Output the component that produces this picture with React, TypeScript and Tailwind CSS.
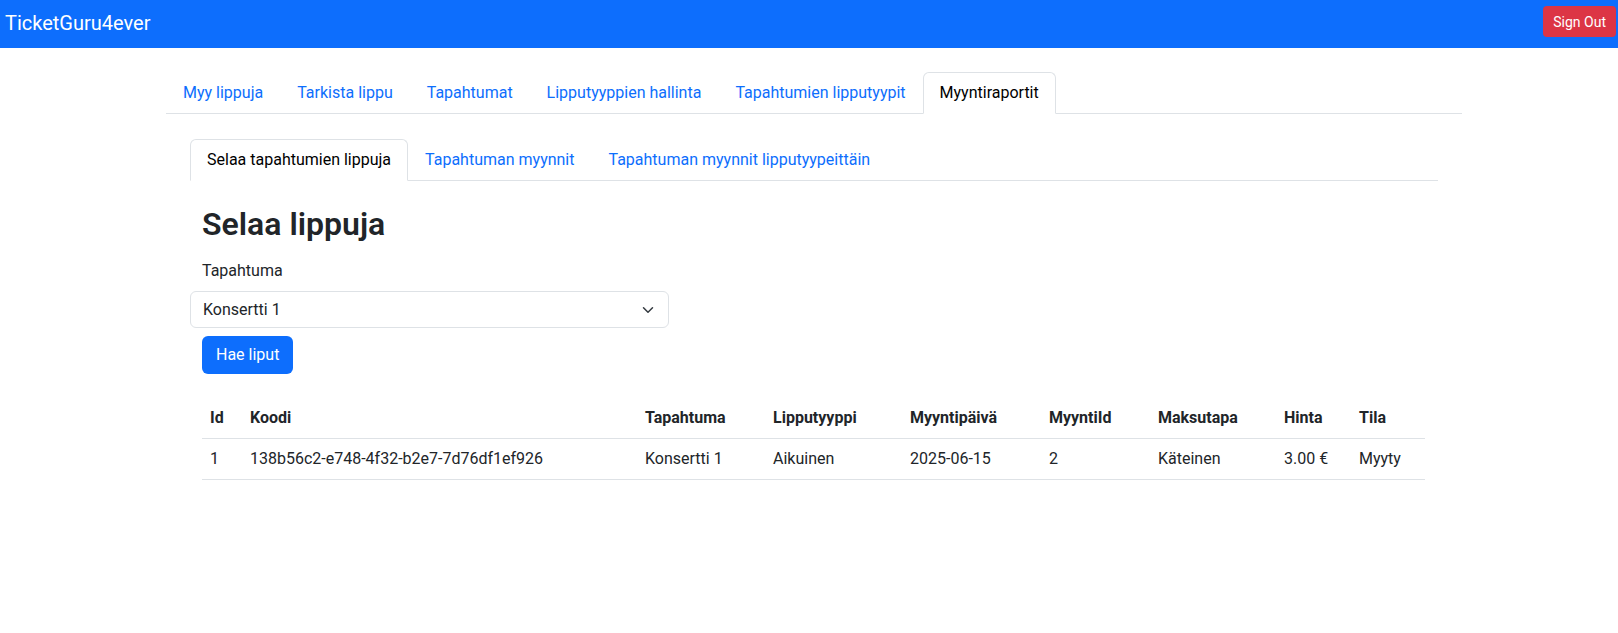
import React from "react";

const mainTabs = [
  "Myy lippuja",
  "Tarkista lippu",
  "Tapahtumat",
  "Lipputyyppien hallinta",
  "Tapahtumien lipputyypit",
  "Myyntiraportit",
];

const subTabs = [
  "Selaa tapahtumien lippuja",
  "Tapahtuman myynnit",
  "Tapahtuman myynnit lipputyypeittäin",
];

const columns = [
  { label: "Id", w: "w-[40px]" },
  { label: "Koodi", w: "w-[395px]" },
  { label: "Tapahtuma", w: "w-[128px]" },
  { label: "Lipputyyppi", w: "w-[137px]" },
  { label: "Myyntipäivä", w: "w-[139px]" },
  { label: "MyyntiId", w: "w-[109px]" },
  { label: "Maksutapa", w: "w-[126px]" },
  { label: "Hinta", w: "w-[75px]" },
  { label: "Tila", w: "w-[74px]" },
];

const rows = [
  ["1", "138b56c2-e748-4f32-b2e7-7d76df1ef926", "Konsertti 1", "Aikuinen", "2025-06-15", "2", "Käteinen", "3.00 €", "Myyty"],
];

interface TabsProps {
  items: string[];
  active: number;
}

const Tabs: React.FC<TabsProps> = ({ items, active }) => (
  <ul className="flex border-b border-[#dee2e6]">
    {items.map((t, i) => (
      <li key={t} className="-mb-px">
        <span
          className={
            i === active
              ? "block px-4 py-2 border border-[#dee2e6] border-b-white rounded-t-md bg-white text-black"
              : "block px-4 py-2 border border-transparent text-[#0d6efd] cursor-pointer"
          }
        >
          {t}
        </span>
      </li>
    ))}
  </ul>
);

export default function App() {
  return (
    <div className="min-h-screen bg-white text-base leading-6 text-[#212529] font-[family-name:Roboto,'Noto_Sans',sans-serif]">
      <nav className="h-12 bg-[#0d6efd] flex items-start justify-between pl-[5px] pr-[2px]">
        <span className="text-xl leading-[30px] mt-[8px] text-white">TicketGuru4ever</span>
        <button className="mt-[6px] h-[31px] px-[10px] rounded bg-[#dc3545] text-white text-sm">
          Sign Out
        </button>
      </nav>

      <div className="ml-[166px] w-[1296px] mt-6">
        <Tabs items={mainTabs} active={5} />

        <div className="px-6 mt-[25px]">
          <Tabs items={subTabs} active={0} />

          <div className="px-3 pt-6">
            <h2 className="text-[32px] leading-[38px] font-semibold mb-4">Selaa lippuja</h2>
            <div className="mb-2">Tapahtuma</div>
            <div className="-mx-3 w-[479px] h-[37px] flex items-center justify-between border border-[#dee2e6] rounded-md pl-3 pr-3">
              <span>Konsertti 1</span>
              <svg width="16" height="12" viewBox="0 0 16 16" fill="none">
                <path d="m2 5 6 6 6-6" stroke="#343a40" strokeWidth="2" strokeLinecap="round" strokeLinejoin="round" />
              </svg>
            </div>
            <button className="mt-2 h-[38px] px-[14px] rounded-md bg-[#0d6efd] text-white">Hae liput</button>

            <table className="mt-6 w-[1223px] table-fixed border-collapse">
              <thead>
                <tr className="border-b border-[#dee2e6]">
                  {columns.map((c) => (
                    <th key={c.label} className={`${c.w} p-2 text-left font-bold`}>
                      {c.label}
                    </th>
                  ))}
                </tr>
              </thead>
              <tbody>
                {rows.map((r) => (
                  <tr key={r[0]} className="border-b border-[#dee2e6]">
                    {r.map((cell, i) => (
                      <td key={i} className="p-2">
                        {cell}
                      </td>
                    ))}
                  </tr>
                ))}
              </tbody>
            </table>
          </div>
        </div>
      </div>
    </div>
  );
}
